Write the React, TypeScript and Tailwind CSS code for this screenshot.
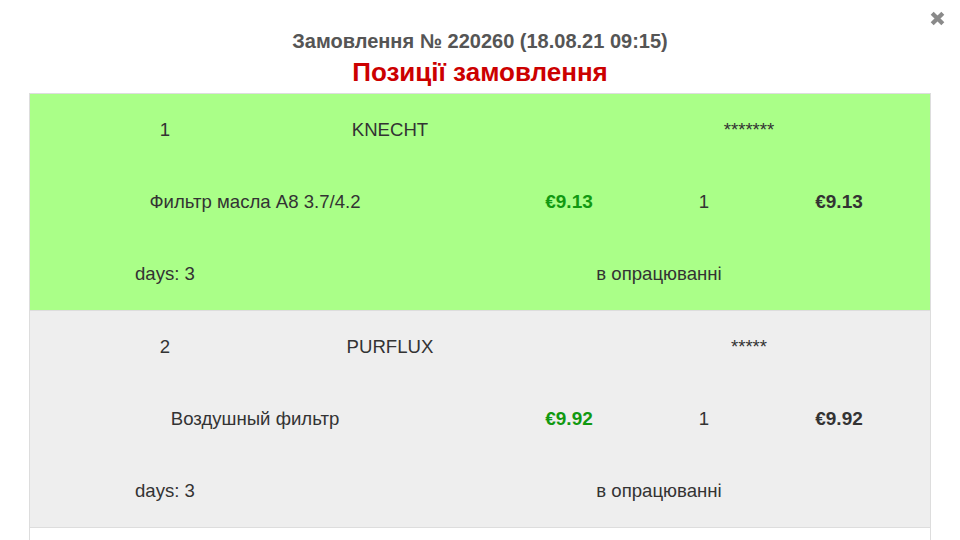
import React from "react";

const font = { fontFamily: '"Liberation Sans", Arial, sans-serif' };

function Row({
  bg,
  num,
  brand,
  stars,
  name,
  price,
  qty,
  total,
}: {
  bg: string;
  num: string;
  brand: string;
  stars: string;
  name: string;
  price: string;
  qty: string;
  total: string;
}) {
  return (
    <div className={`${bg} border-b border-[#dddddd] text-[18.6px] text-[#333333]`}>
      <div className="flex h-[72px] items-center">
        <div className="w-[270px] text-center">{num}</div>
        <div className="w-[180px] text-center">{brand}</div>
        <div className="w-[90px]" />
        <div className="w-[358px] text-center">{stars}</div>
      </div>
      <div className="flex h-[72px] items-center">
        <div className="w-[450px] text-center">{name}</div>
        <div className="w-[178px] text-center text-[19px] font-bold text-[#119911]">{price}</div>
        <div className="w-[92px] text-center">{qty}</div>
        <div className="w-[178px] text-center text-[19px] font-bold">{total}</div>
      </div>
      <div className="flex h-[72px] items-center">
        <div className="w-[270px] text-center">days: 3</div>
        <div className="w-[90px]" />
        <div className="w-[538px] text-center">в опрацюванні</div>
      </div>
    </div>
  );
}

export default function App() {
  return (
    <div className="relative h-[540px] w-[960px] overflow-hidden bg-white" style={font}>
      <button className="absolute left-[929px] top-[10px] h-[17px] w-[17px]">
        <svg viewBox="0 0 16 16" className="h-full w-full">
          <path d="M3 3 L13 13 M13 3 L3 13" stroke="#8a8a8a" strokeWidth="4" strokeLinecap="butt" />
        </svg>
      </button>
      <div className="flex flex-col items-center pt-[28px]">
        <div className="text-[20px] font-bold leading-[26px] text-[#555555]">
          Замовлення № 220260 (18.08.21 09:15)
        </div>
        <div className="mt-[3px] text-[26px] font-bold leading-[30px] text-[#cc0000]">
          Позиції замовлення
        </div>
      </div>
      <div className="mx-[29px] mt-[6px] border-x border-t border-[#dddddd]">
        <Row
          bg="bg-[#aaff88]"
          num="1"
          brand="KNECHT"
          stars="*******"
          name="Фильтр масла A8 3.7/4.2"
          price="€9.13"
          qty="1"
          total="€9.13"
        />
        <Row
          bg="bg-[#eeeeee]"
          num="2"
          brand="PURFLUX"
          stars="*****"
          name="Воздушный фильтр"
          price="€9.92"
          qty="1"
          total="€9.92"
        />
        <div className="h-[40px] bg-white" />
      </div>
    </div>
  );
}
